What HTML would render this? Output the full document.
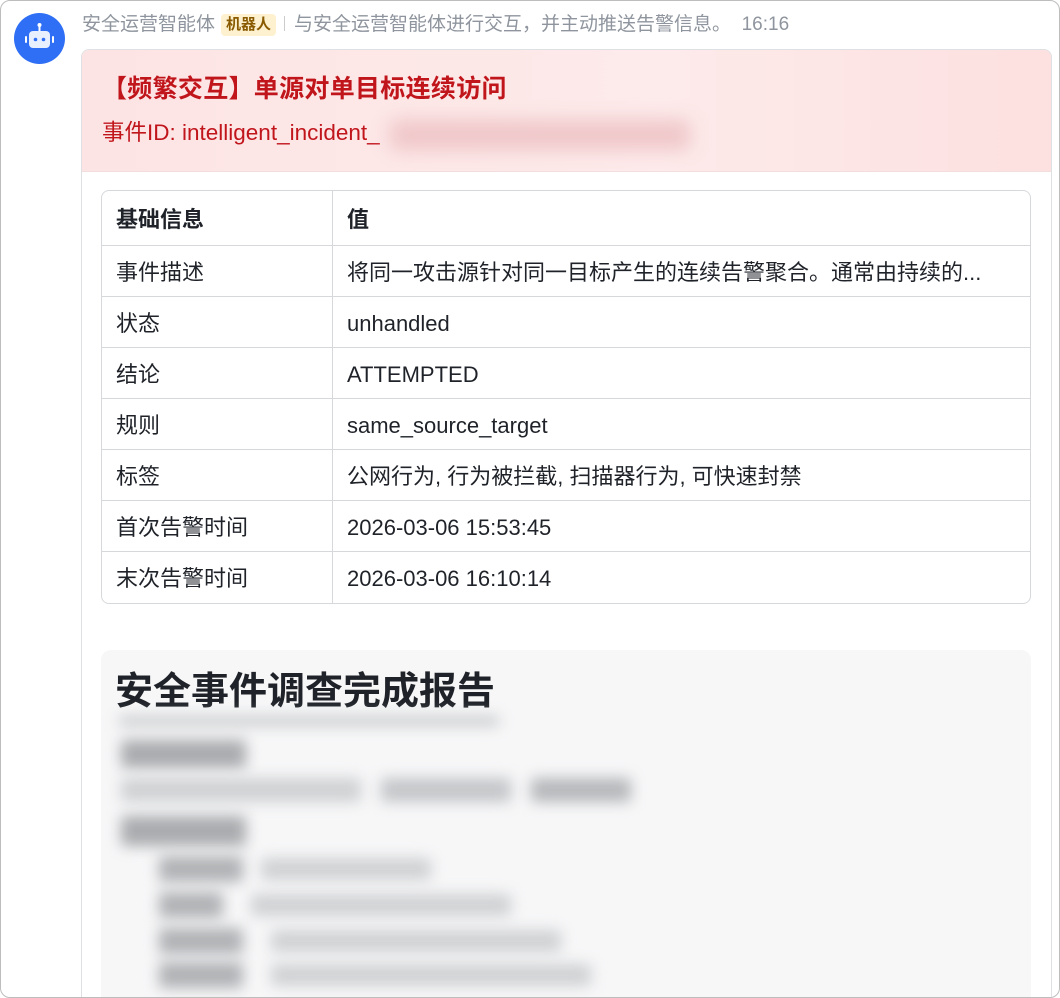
<!DOCTYPE html>
<html><head><meta charset="utf-8"><style>
*{box-sizing:border-box;margin:0;padding:0}
html,body{width:1060px;height:998px;overflow:hidden;background:#fff;font-family:"Liberation Sans","Noto Sans CJK SC",sans-serif}
.win{position:absolute;left:0;top:0;width:1060px;height:998px;border:1.5px solid #bdbdbd;border-radius:10px;overflow:hidden;background:#fff}
.av{position:absolute;left:13px;top:12px;width:51px;height:51px;border-radius:50%;background:#2f6ff5}
.hdr{position:absolute;left:81px;top:12px;font-size:19px;color:#8f959e;white-space:nowrap;line-height:24px}
.tag{display:inline-block;background:#fdf1cf;color:#8a5a00;border-radius:4px;padding:0 5px;font-size:15px;line-height:22px;margin:0 8px 0 6px;font-weight:bold;vertical-align:1px}
.sep{display:inline-block;width:1px;height:15px;background:#ccc;margin-right:9px;vertical-align:-1px}
.card{position:absolute;left:80px;top:48px;width:971px;height:960px;border:1px solid #dee0e3;border-radius:8px;overflow:hidden;background:#fff}
.ch{height:122px;background:linear-gradient(90deg,#fde4e4,#fdeaea 60%,#fde0e0);border-bottom:1px solid #f3dede;position:relative}
.t1{position:absolute;left:20px;top:23px;font-size:25px;line-height:32px;font-weight:bold;color:#c1151c;letter-spacing:0.3px}
.t2{position:absolute;left:20px;top:69px;font-size:22.5px;line-height:28px;color:#c1151c}
.blur{position:absolute;filter:blur(9px);background:#efc7c9;border-radius:6px}
table{position:absolute;left:19px;top:140px;width:930px;border-collapse:separate;border-spacing:0;border:1px solid #d6d8db;border-radius:8px;font-size:22px;color:#1f2329}
td{height:51px;padding:3px 14px 0;border-bottom:1px solid #d6d8db;line-height:26px;vertical-align:middle}
tr:last-child td{border-bottom:none}
td:first-child{width:231px;border-right:1px solid #d6d8db}
tr:first-child td{height:55px;font-weight:bold}
.rep{position:absolute;left:19px;top:600px;width:930px;height:360px;background:#f7f7f8;border-radius:10px;overflow:hidden}
.rt{position:absolute;left:14px;top:19px;font-size:38px;line-height:46px;font-weight:bold;color:#1f2329}
.g{position:absolute;background:#b9bbbe;filter:blur(7px);border-radius:3px}
</style></head><body><div class="win">
<div class="av"><svg width="51" height="51" viewBox="0 0 51 51"><line x1="25.5" y1="13" x2="25.5" y2="18" stroke="#fff" stroke-width="2"/><circle cx="25.5" cy="12" r="2" fill="#fff"/><rect x="15" y="18" width="21" height="17" rx="4" fill="#e8efff"/><rect x="11" y="23" width="2" height="7" rx="1" fill="#fff"/><rect x="38" y="23" width="2" height="7" rx="1" fill="#fff"/><circle cx="21.5" cy="26.5" r="1.8" fill="#2f6ff5"/><circle cx="29.5" cy="26.5" r="1.8" fill="#2f6ff5"/></svg></div>
<div class="hdr">安全运营智能体<span class="tag">机器人</span><span class="sep"></span>与安全运营智能体进行交互，并主动推送告警信息。&nbsp;&nbsp;16:16</div>
<div class="card">
<div class="ch"><div class="t1">【频繁交互】单源对单目标连续访问</div><div class="t2">事件ID: intelligent_incident_</div><div class="blur" style="left:308px;top:70px;width:300px;height:30px"></div></div>
<table>
<tr><td>基础信息</td><td>值</td></tr>
<tr><td>事件描述</td><td>将同一攻击源针对同一目标产生的连续告警聚合。通常由持续的...</td></tr>
<tr><td>状态</td><td>unhandled</td></tr>
<tr><td>结论</td><td>ATTEMPTED</td></tr>
<tr><td>规则</td><td>same_source_target</td></tr>
<tr><td>标签</td><td>公网行为, 行为被拦截, 扫描器行为, 可快速封禁</td></tr>
<tr><td>首次告警时间</td><td>2026-03-06 15:53:45</td></tr>
<tr><td>末次告警时间</td><td>2026-03-06 16:10:14</td></tr>
</table>
<div class="rep"><div class="rt">安全事件调查完成报告</div>
<div class="g" style="left:18px;top:66px;width:380px;height:10px;background:#c8cacc"></div>
<div class="g" style="left:20px;top:90px;width:125px;height:28px;background:#a9abae"></div>
<div class="g" style="left:20px;top:128px;width:240px;height:24px;background:#cfd1d3"></div>
<div class="g" style="left:280px;top:128px;width:130px;height:24px;background:#c4c6c9"></div>
<div class="g" style="left:430px;top:128px;width:100px;height:24px;background:#b6b8bb"></div>
<div class="g" style="left:20px;top:166px;width:125px;height:30px;background:#a9abae"></div>
<div class="g" style="left:58px;top:206px;width:84px;height:26px;background:#b0b2b5"></div><div class="g" style="left:160px;top:208px;width:170px;height:22px;background:#cfd1d3"></div>
<div class="g" style="left:58px;top:242px;width:64px;height:26px;background:#b0b2b5"></div><div class="g" style="left:150px;top:244px;width:260px;height:22px;background:#cfd1d3"></div>
<div class="g" style="left:58px;top:278px;width:84px;height:26px;background:#b0b2b5"></div><div class="g" style="left:170px;top:280px;width:290px;height:22px;background:#cfd1d3"></div>
<div class="g" style="left:58px;top:312px;width:84px;height:26px;background:#b0b2b5"></div><div class="g" style="left:170px;top:314px;width:320px;height:22px;background:#cfd1d3"></div>
</div>
</div>
</div></body></html>
